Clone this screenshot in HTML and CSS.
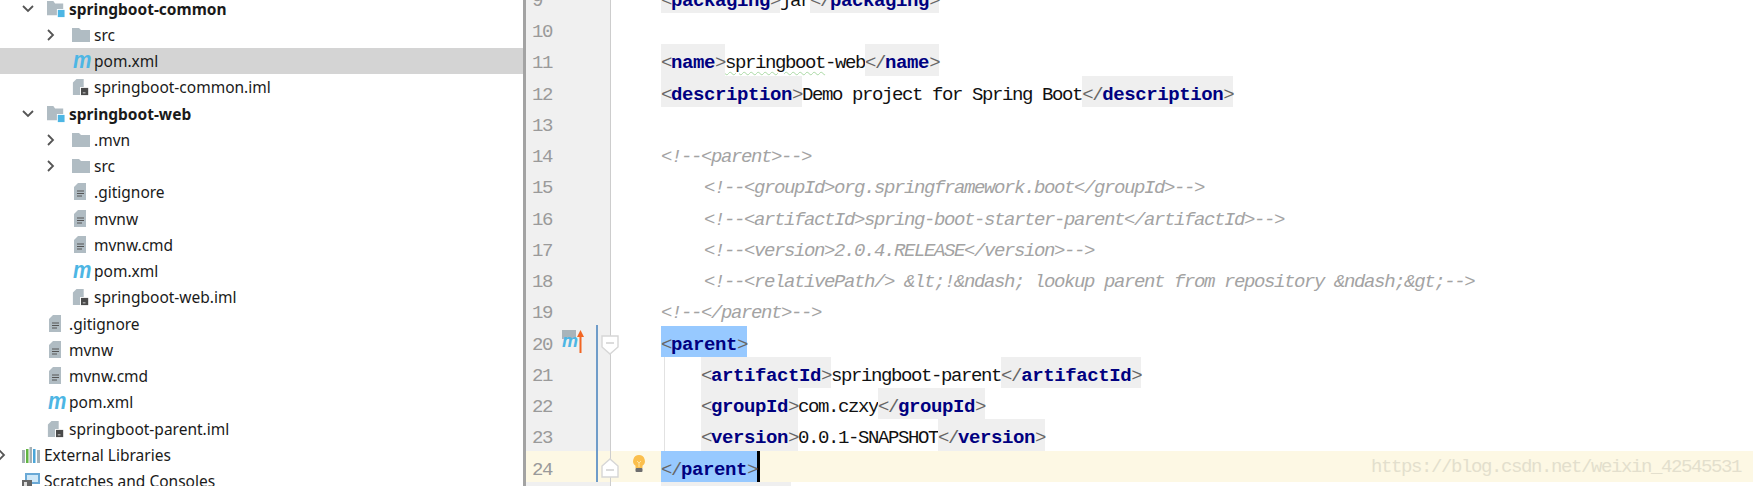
FILE: index.html
```html
<!DOCTYPE html>
<html lang="en">
<head>
<meta charset="utf-8">
<title>springboot-web pom.xml</title>
<link rel="stylesheet" href="styles.css">
</head>
<body>
<svg class="defs" width="0" height="0" aria-hidden="true">
  <defs>
    <symbol id="folder" viewBox="0 0 18 16"><path d="M0 1h7l2 2h9v12H0z" fill="#b0bcc3"/></symbol>
    <symbol id="module" viewBox="0 0 20 20"><path d="M0 1h7l2 3h9v13H0z" fill="#b0bcc3"/><rect x="11" y="10" width="8.5" height="9" fill="#fff"/><rect x="12" y="11" width="7.5" height="8" fill="#4db6e4"/></symbol>
    <symbol id="file" viewBox="0 0 14 18"><path d="M4 0h8v17H0V4z" fill="#b0bcc3"/><path d="M3 8h7M3 10.5h7M3 13h5" stroke="#555" stroke-width="1" fill="none"/></symbol>
    <symbol id="iml" viewBox="0 0 18 20"><path d="M4 1h8v18H0V5z" fill="#b0bcc3"/><rect x="8" y="10" width="10" height="10" fill="#fff"/><rect x="9" y="11" width="8" height="8" fill="#4a4a4a"/><path d="M11 16.5h3" stroke="#ddd" stroke-width="1"/></symbol>
    <symbol id="open" viewBox="0 0 12 8"><path d="M1 1l5 5 5-5" fill="none" stroke="#555" stroke-width="1.8"/></symbol>
    <symbol id="closed" viewBox="0 0 8 12"><path d="M1 1l5 5-5 5" fill="none" stroke="#555" stroke-width="1.8"/></symbol>
  </defs>
</svg>
<main class="app">
  <nav class="tree">
    <div class="rows">
      <div class="row lv1"><svg class="arrow down"><use href="#open"/></svg><svg class="ico"><use href="#module"/></svg><strong class="label">springboot-common</strong></div>
      <div class="row lv2"><svg class="arrow right"><use href="#closed"/></svg><svg class="ico"><use href="#folder"/></svg><span class="label">src</span></div>
      <div class="row lv2 picked"><span class="m">m</span><span class="label">pom.xml</span></div>
      <div class="row lv2"><svg class="ico"><use href="#iml"/></svg><span class="label">springboot-common.iml</span></div>
      <div class="row lv1"><svg class="arrow down"><use href="#open"/></svg><svg class="ico"><use href="#module"/></svg><strong class="label">springboot-web</strong></div>
      <div class="row lv2"><svg class="arrow right"><use href="#closed"/></svg><svg class="ico"><use href="#folder"/></svg><span class="label">.mvn</span></div>
      <div class="row lv2"><svg class="arrow right"><use href="#closed"/></svg><svg class="ico"><use href="#folder"/></svg><span class="label">src</span></div>
      <div class="row lv2"><svg class="ico"><use href="#file"/></svg><span class="label">.gitignore</span></div>
      <div class="row lv2"><svg class="ico"><use href="#file"/></svg><span class="label">mvnw</span></div>
      <div class="row lv2"><svg class="ico"><use href="#file"/></svg><span class="label">mvnw.cmd</span></div>
      <div class="row lv2"><span class="m">m</span><span class="label">pom.xml</span></div>
      <div class="row lv2"><svg class="ico"><use href="#iml"/></svg><span class="label">springboot-web.iml</span></div>
      <div class="row lv1"><svg class="ico"><use href="#file"/></svg><span class="label">.gitignore</span></div>
      <div class="row lv1"><svg class="ico"><use href="#file"/></svg><span class="label">mvnw</span></div>
      <div class="row lv1"><svg class="ico"><use href="#file"/></svg><span class="label">mvnw.cmd</span></div>
      <div class="row lv1"><span class="m">m</span><span class="label">pom.xml</span></div>
      <div class="row lv1"><svg class="ico"><use href="#iml"/></svg><span class="label">springboot-parent.iml</span></div>
      <div class="row lv0"><svg class="arrow right edge"><use href="#closed"/></svg>
        <svg class="ico" viewBox="0 0 18 18"><rect x="0" y="4" width="3" height="13" fill="#a5b0b5"/><rect x="4" y="3" width="2.5" height="14" fill="#62b543"/><rect x="7.5" y="1" width="2.5" height="16" fill="#a5b0b5"/><rect x="11" y="3" width="2.5" height="14" fill="#4aa5d8"/><rect x="15" y="4" width="3" height="13" fill="#a5b0b5"/></svg>
        <span class="label">External Libraries</span></div>
      <div class="row lv0">
        <svg class="ico" viewBox="0 0 18 18"><rect x="3" y="1" width="15" height="11" fill="#6aa9d6"/><rect x="5" y="3" width="11" height="7" fill="#cfe8f8"/><rect x="0" y="8" width="10" height="10" fill="#666"/><rect x="2" y="10" width="3" height="6" fill="#ddd"/></svg>
        <span class="label">Scratches and Consoles</span></div>
    </div>
  </nav>
  <div class="divider"></div>
  <section class="editor">
    <div class="lines">
      <div class="line"><div class="gut">9</div><div class="code"><span class="tag"><span class="br">&lt;</span><b>packaging</b><span class="br">&gt;</span></span>jar<span class="tag"><span class="br">&lt;/</span><b>packaging</b><span class="br">&gt;</span></span></div></div>
      <div class="line"><div class="gut">10</div><div class="code"></div></div>
      <div class="line"><div class="gut">11</div><div class="code"><span class="tag"><span class="br">&lt;</span><b>name</b><span class="br">&gt;</span></span><span class="typo">springboot</span>-web<span class="tag"><span class="br">&lt;/</span><b>name</b><span class="br">&gt;</span></span></div></div>
      <div class="line"><div class="gut">12</div><div class="code"><span class="tag"><span class="br">&lt;</span><b>description</b><span class="br">&gt;</span></span>Demo project for Spring Boot<span class="tag"><span class="br">&lt;/</span><b>description</b><span class="br">&gt;</span></span></div></div>
      <div class="line"><div class="gut">13</div><div class="code"></div></div>
      <div class="line"><div class="gut">14</div><div class="code note">&lt;!--&lt;parent&gt;--&gt;</div></div>
      <div class="line"><div class="gut">15</div><div class="code note"><span class="in">&lt;!--&lt;groupId&gt;org.springframework.boot&lt;/groupId&gt;--&gt;</span></div></div>
      <div class="line"><div class="gut">16</div><div class="code note"><span class="in">&lt;!--&lt;artifactId&gt;spring-boot-starter-parent&lt;/artifactId&gt;--&gt;</span></div></div>
      <div class="line"><div class="gut">17</div><div class="code note"><span class="in">&lt;!--&lt;version&gt;2.0.4.RELEASE&lt;/version&gt;--&gt;</span></div></div>
      <div class="line"><div class="gut">18</div><div class="code note"><span class="in">&lt;!--&lt;relativePath/&gt; &amp;lt;!&amp;ndash; lookup parent from repository &amp;ndash;&amp;gt;--&gt;</span></div></div>
      <div class="line"><div class="gut">19</div><div class="code note">&lt;!--&lt;/parent&gt;--&gt;</div></div>
      <div class="line"><div class="gut">20
        <span class="m-up">m</span>
        <svg class="up" viewBox="0 0 7 23"><path d="M3.5 23V5" stroke="#f26522" stroke-width="2" fill="none"/><path d="M0 7L3.5 0 7 7z" fill="#f26522"/></svg>
        <svg class="fold" viewBox="0 0 18 20"><path d="M1 1h16v11l-8 7-8-7z" fill="#fff" stroke="#d6d6d6" stroke-width="1.4"/><path d="M5 8h8" stroke="#c4c4c4" stroke-width="1.2"/></svg>
      </div><div class="code"><span class="sel"><span class="br">&lt;</span><b>parent</b><span class="br">&gt;</span></span></div></div>
      <div class="line"><div class="gut">21</div><div class="code guide"><span class="tag"><span class="br">&lt;</span><b>artifactId</b><span class="br">&gt;</span></span>springboot-parent<span class="tag"><span class="br">&lt;/</span><b>artifactId</b><span class="br">&gt;</span></span></div></div>
      <div class="line"><div class="gut">22</div><div class="code guide"><span class="tag"><span class="br">&lt;</span><b>groupId</b><span class="br">&gt;</span></span>com.czxy<span class="tag"><span class="br">&lt;/</span><b>groupId</b><span class="br">&gt;</span></span></div></div>
      <div class="line"><div class="gut">23</div><div class="code guide"><span class="tag"><span class="br">&lt;</span><b>version</b><span class="br">&gt;</span></span>0.0.1-SNAPSHOT<span class="tag"><span class="br">&lt;/</span><b>version</b><span class="br">&gt;</span></span></div></div>
      <div class="line now"><div class="gut">24
        <svg class="fold" viewBox="0 0 18 20"><path d="M1 19h16V8L9 1 1 8z" fill="#fff" stroke="#d6d6d6" stroke-width="1.4"/><path d="M5 12h8" stroke="#c4c4c4" stroke-width="1.2"/></svg>
      </div><div class="code"><svg class="bulb" viewBox="0 0 14 19"><path d="M7 1a6 6 0 0 0-3.5 10.8V14h7v-2.2A6 6 0 0 0 7 1z" fill="#fbbf4d"/><path d="M5 7l2 2 2-2M7 9v4" stroke="#fde3a4" fill="none"/><rect x="3.5" y="14" width="7" height="4" rx="1" fill="#6e6e6e"/></svg><span class="sel caret"><span class="br">&lt;/</span><b>parent</b><span class="br">&gt;</span></span></div></div>
      <div class="line"><div class="gut">25</div><div class="code"><span class="tag"><span class="br">&lt;</span><b>properties</b><span class="br">&gt;</span></span></div></div>
    </div>
    <div class="change"></div>
    <div class="mark">https://blog.csdn.net/weixin_42545531</div>
  </section>
</main>
</body>
</html>
```

FILE: styles.css
```css
* { box-sizing: border-box; }
html, body { margin: 0; height: 486px; overflow: hidden; background: #fff; }
.defs { position: absolute; }
.app { display: flex; height: 486px; overflow: hidden; }

/* project tree */
.tree { width: 523px; flex: none; overflow: hidden; font-family: "Noto Sans", sans-serif; font-size: 15.5px; color: #1a1a1a; }
.rows { margin-top: -4.5px; }
.row { position: relative; display: flex; align-items: center; height: 26.25px; white-space: nowrap; }
.row.picked { background: #d4d4d4; }
.lv0 { padding-left: 22px; }
.lv1 { padding-left: 47px; }
.lv2 { padding-left: 72px; }
.label { margin-left: 4px; }
strong.label { font-weight: 700; }
.ico { width: 18px; height: 18px; flex: none; }
.m { width: 18px; flex: none; font: italic 700 23px/20px "Liberation Sans", sans-serif; color: #4db6e4; text-align: center; margin-top: -3px; transform: scaleX(0.9); }
.arrow { position: absolute; }
.arrow.down { width: 12px; height: 8px; left: 22px; }
.arrow.right { width: 8px; height: 12px; left: 47px; }
.arrow.right.edge { left: -2px; }

.divider { width: 3px; flex: none; background: #a3a3a3; }

/* editor */
.editor { position: relative; flex: 1; overflow: hidden; }
.lines { margin-top: -18.25px; font-family: "Liberation Mono", monospace; font-size: 19px; letter-spacing: -1.4px; }
.line { display: flex; height: 31.25px; line-height: 39px; white-space: pre; }
.gut { position: relative; width: 85px; height: 31.25px; flex: none; padding-left: 6px; background: #f0f0f0; border-right: 1px solid #cdcdcd; color: #9a9a9a; }
.code { position: relative; flex: 1; height: 31.25px; padding-left: 50px; color: #111; }
.now .gut, .now .code { background: #fdf8e4; }
.tag { display: inline-block; height: 31.25px; background: #efefef; }
.br { color: #666; }
.tag b, .sel b { font-weight: 700; color: #000080; letter-spacing: -0.4px; }
.sel { display: inline-block; height: 31.25px; background: #97c9ff; }
.caret { border-right: 3px solid #000; }
.note { color: #a3a3a3; font-style: italic; letter-spacing: -1.4px; }
.in { padding-left: 43px; }
.guide::before { content: ""; position: absolute; left: 53px; top: 0; bottom: 0; border-left: 1px solid #e2e2e2; }
.guide { padding-left: 90px; }
.typo { text-decoration: underline wavy #a9d8a4 1px; text-underline-offset: 3px; }
.m-up { position: absolute; left: 36px; top: 4px; width: 14px; height: 9px; background: #a9b4ba; font: italic 700 18px/22px "Liberation Sans", sans-serif; letter-spacing: 0; color: #4db6e4; }
.up { position: absolute; left: 51px; top: 4px; width: 7px; height: 23px; }
.fold { position: absolute; left: 75px; top: 9px; width: 18px; height: 20px; z-index: 1; }
.now .fold { top: 7px; }
.bulb { position: absolute; left: 21px; top: 3px; width: 14px; height: 19px; }
.change { position: absolute; left: 70px; top: 325px; width: 1.5px; height: 157px; background: #6f9cc9; }
.mark { position: absolute; right: 12px; top: 452px; font: 19px/31px "Liberation Mono", monospace; letter-spacing: -1.4px; color: #e3dfcd; }
```
